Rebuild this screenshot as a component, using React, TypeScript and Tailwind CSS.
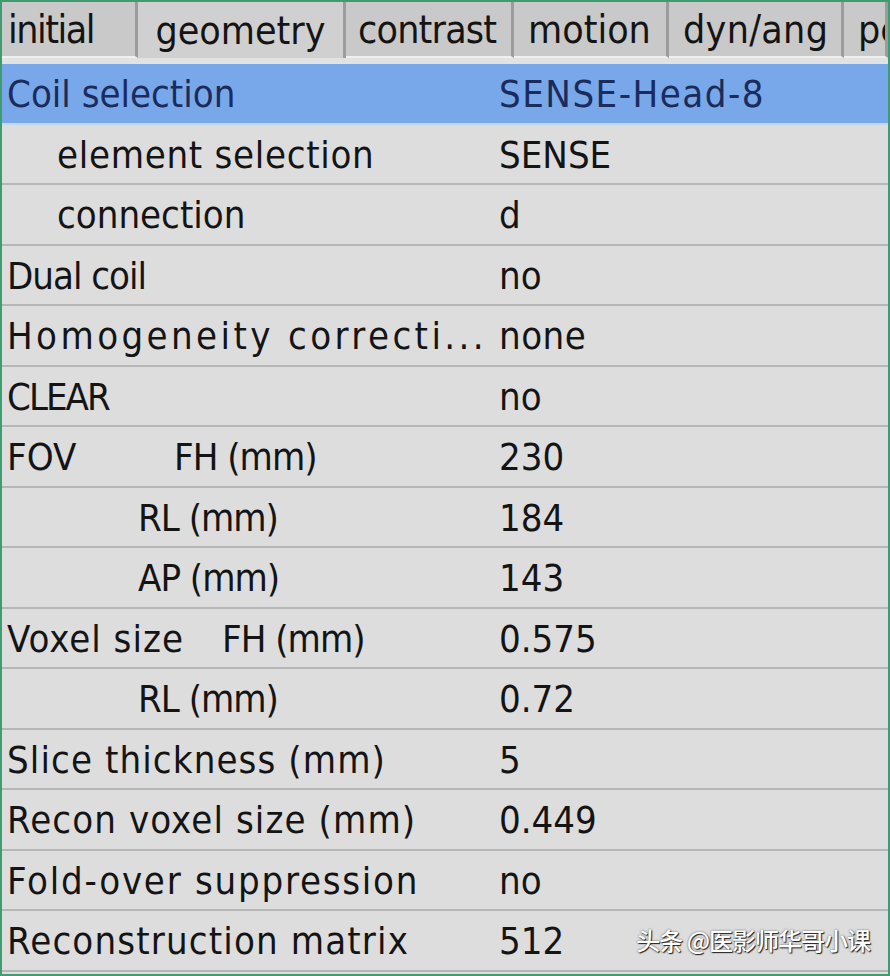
import React from 'react';

const tabs = [
  { label: 'initial', w: 'w-[136px]', active: false, cls: 'pl-[6px] tracking-[-1.5px]' },
  { label: 'geometry', w: 'w-[208px]', active: true, cls: '' },
  { label: 'contrast', w: 'w-[168px]', active: false, cls: 'pl-[12px] tracking-[-0.8px]' },
  { label: 'motion', w: 'w-[155px]', active: false, cls: 'pl-[14px]' },
  { label: 'dyn/ang', w: 'w-[175px]', active: false, cls: 'pl-[14px] tracking-[0.3px]' },
  { label: 'pe', w: 'flex-1', active: false, cls: 'pl-[14px]' },
];

type Row = { label: React.ReactNode; value: string; selected?: boolean; vcls?: string };

const rows: Row[] = [
  { label: <span>Coil selection</span>, value: 'SENSE-Head-8', selected: true, vcls: 'tracking-[1.5px]' },
  { label: <span className="pl-[50px] tracking-[0.7px]">element selection</span>, value: 'SENSE' },
  { label: <span className="pl-[50px]">connection</span>, value: 'd' },
  { label: <span className="tracking-[-1px]">Dual coil</span>, value: 'no' },
  { label: <span className="tracking-[3.4px]">Homogeneity correcti...</span>, value: 'none', vcls: 'tracking-[0.5px]' },
  { label: <span className="tracking-[-2px]">CLEAR</span>, value: 'no' },
  {
    label: (
      <span className="flex">
        <span className="w-[167px]">FOV</span>
        <span className="tracking-[-1px]">FH (mm)</span>
      </span>
    ),
    value: '230',
  },
  { label: <span className="pl-[131px] tracking-[-1px]">RL (mm)</span>, value: '184' },
  { label: <span className="pl-[131px] tracking-[-1px]">AP (mm)</span>, value: '143' },
  {
    label: (
      <span className="flex">
        <span className="w-[215px] tracking-[1px]">Voxel size</span>
        <span className="tracking-[-1px]">FH (mm)</span>
      </span>
    ),
    value: '0.575',
  },
  { label: <span className="pl-[131px] tracking-[-1px]">RL (mm)</span>, value: '0.72' },
  { label: <span className="tracking-[1.1px]">Slice thickness (mm)</span>, value: '5' },
  { label: <span className="tracking-[1.1px]">Recon voxel size (mm)</span>, value: '0.449' },
  { label: <span className="tracking-[1.75px]">Fold-over suppression</span>, value: 'no' },
  { label: <span className="tracking-[1.15px]">Reconstruction matrix</span>, value: '512' },
];

export default function App() {
  return (
    <div className="w-[890px] h-[976px] overflow-hidden border-2 border-[#3f9c70] bg-[#dddddd] text-[#141414] font-['DejaVu_Sans_Condensed','Liberation_Sans_Narrow',sans-serif] flex flex-col">
      {/* tab strip */}
      <div className="flex h-[62px] bg-[#e2e2e2] pb-[6px]">
        {tabs.map((t, i) => (
          <div
            key={i}
            className={`${t.w} h-full flex items-center overflow-hidden text-[39px] leading-none ${
              t.active
                ? 'bg-[#d0d0d0] justify-center border-r-[3px] border-r-[#9c9c9c]'
                : 'bg-[#c9c9c9] border-r-[3px] border-[#9c9c9c] border-b-2 border-b-[#f0f0f0]'
            }`}
          >
            <span className={`whitespace-nowrap ${t.cls}`}>{t.label}</span>
          </div>
        ))}
      </div>

      {/* parameter list */}
      <div className="flex-1 flex flex-col">
        {rows.map((r, i) => (
          <div
            key={i}
            className={`h-[60.5px] flex items-center text-[38px] leading-none border-b-2 ${
              r.selected
                ? 'bg-[#78a8ea] text-[#1a2b5c] border-[#c4d6ee]'
                : 'border-[#b6b6b6]'
            } ${i === rows.length - 1 ? 'border-b-0' : ''}`}
          >
            <div className="w-[497px] pl-[5px] pt-[2px] whitespace-nowrap">{r.label}</div>
            <div className={`flex-1 pt-[2px] whitespace-nowrap ${r.vcls ?? ''}`}>{r.value}</div>
            {i === rows.length - 1 && (
              <div className="pr-[18px] text-[24px] tracking-[-1px] font-medium text-white font-['Noto_Sans_CJK_SC',sans-serif] [text-shadow:1px_1px_1px_#222,0_0_2px_#555]">
                头条 @医影师华哥小课
              </div>
            )}
          </div>
        ))}
      </div>
    </div>
  );
}
